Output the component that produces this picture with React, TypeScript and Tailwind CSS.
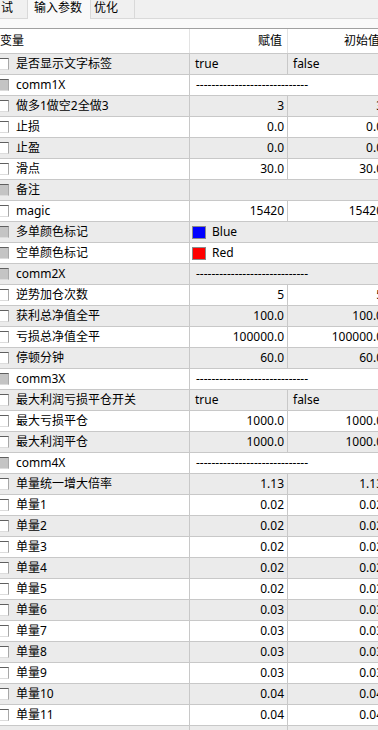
import React from "react";

type Row = {
  name: string;
  kind: "num" | "bool" | "group" | "empty" | "color";
  v?: string;
  init?: string;
  gray?: boolean;
  swatch?: string;
};

const rows: Row[] = [
  { name: "是否显示文字标签", kind: "bool", v: "true", init: "false" },
  { name: "comm1X", kind: "group", gray: true },
  { name: "做多1做空2全做3", kind: "num", v: "3", init: "3" },
  { name: "止损", kind: "num", v: "0.0", init: "0.0" },
  { name: "止盈", kind: "num", v: "0.0", init: "0.0" },
  { name: "滑点", kind: "num", v: "30.0", init: "30.0" },
  { name: "备注", kind: "empty", gray: true },
  { name: "magic", kind: "num", v: "15420", init: "15420" },
  { name: "多单颜色标记", kind: "color", v: "Blue", swatch: "bg-[#0000ff]", gray: true },
  { name: "空单颜色标记", kind: "color", v: "Red", swatch: "bg-[#ff0000]", gray: true },
  { name: "comm2X", kind: "group", gray: true },
  { name: "逆势加仓次数", kind: "num", v: "5", init: "5" },
  { name: "获利总净值全平", kind: "num", v: "100.0", init: "100.0" },
  { name: "亏损总净值全平", kind: "num", v: "100000.0", init: "100000.0" },
  { name: "停顿分钟", kind: "num", v: "60.0", init: "60.0" },
  { name: "comm3X", kind: "group", gray: true },
  { name: "最大利润亏损平仓开关", kind: "bool", v: "true", init: "false" },
  { name: "最大亏损平仓", kind: "num", v: "1000.0", init: "1000.0" },
  { name: "最大利润平仓", kind: "num", v: "1000.0", init: "1000.0" },
  { name: "comm4X", kind: "group", gray: true },
  { name: "单量统一增大倍率", kind: "num", v: "1.13", init: "1.13" },
  { name: "单量1", kind: "num", v: "0.02", init: "0.02" },
  { name: "单量2", kind: "num", v: "0.02", init: "0.02" },
  { name: "单量3", kind: "num", v: "0.02", init: "0.02" },
  { name: "单量4", kind: "num", v: "0.02", init: "0.02" },
  { name: "单量5", kind: "num", v: "0.02", init: "0.02" },
  { name: "单量6", kind: "num", v: "0.03", init: "0.03" },
  { name: "单量7", kind: "num", v: "0.03", init: "0.03" },
  { name: "单量8", kind: "num", v: "0.03", init: "0.03" },
  { name: "单量9", kind: "num", v: "0.03", init: "0.03" },
  { name: "单量10", kind: "num", v: "0.04", init: "0.04" },
  { name: "单量11", kind: "num", v: "0.04", init: "0.04" },
  { name: "", kind: "num", v: "", init: "" },
];

const DASHES = "-----------------------------";

function ParamRow({ row, i }: { row: Row; i: number }) {
  const bg = i % 2 === 0 ? "bg-[#ebebeb]" : "bg-white";
  const spans = row.kind === "group" || row.kind === "empty" || row.kind === "color";
  return (
    <div className={`grid grid-cols-[190px_98px_120px] h-[21px] border-b border-[#c8c8c8] ${bg}`}>
      <div className="flex items-center border-r border-[#c8c8c8]">
        {row.name && (
          <div
            className={`w-[9px] h-[12px] border-t border-r border-b border-t-[#5f5f5f] border-r-[#a8a8a8] border-b-[#dcdcdc] ${
              row.gray ? "bg-[#c4c4c4]" : "bg-white"
            }`}
          />
        )}
        <span className="ml-[7px] whitespace-nowrap">{row.name}</span>
      </div>
      {spans ? (
        <div className="col-span-2 flex items-center whitespace-nowrap">
          {row.kind === "group" && <span className="pl-[6px]">{DASHES}</span>}
          {row.kind === "color" && (
            <>
              <div className={`ml-[2px] w-[14px] h-[13px] border border-[#8a8a8a] ${row.swatch}`} />
              <span className="ml-[6px]">{row.v}</span>
            </>
          )}
        </div>
      ) : row.kind === "bool" ? (
        <>
          <div className="flex items-center pl-[5px] border-r border-[#c8c8c8]">{row.v}</div>
          <div className="flex items-center pl-[5px]">{row.init}</div>
        </>
      ) : (
        <>
          <div className="flex items-center justify-end pr-[3px] border-r border-[#c8c8c8]">{row.v}</div>
          <div className="flex items-center justify-end pr-[25px]">{row.init}</div>
        </>
      )}
    </div>
  );
}

export default function App() {
  return (
    <div
      className="w-[378px] h-[730px] overflow-hidden bg-white text-[12px] text-black"
      style={{ fontFamily: '"Noto Sans", "Noto Sans CJK SC", sans-serif' }}
    >
      {/* tab strip */}
      <div className="flex h-[19px] bg-[#f0f0f0] border-b border-[#d9d9d9]">
        <div className="w-[28px] pl-[1px] leading-[15px] border-r border-[#d9d9d9]">试</div>
        <div className="w-[63px] h-[19px] pl-[6px] leading-[15px] bg-[#f9f9f9] border-r border-[#d9d9d9]">
          输入参数
        </div>
        <div className="w-[44px] pl-[3px] leading-[15px] border-r border-[#d9d9d9]">优化</div>
      </div>
      <div className="h-[10px] bg-[#f9f9f9] border-b border-[#a0a0a0]" />

      {/* header */}
      <div className="grid grid-cols-[190px_98px_120px] h-[25px] border-b border-[#c8c8c8] bg-white">
        <div className="flex items-center border-r border-[#e3e3e3]">变量</div>
        <div className="flex items-center justify-end pr-[5px] border-r border-[#e3e3e3]">赋值</div>
        <div className="flex items-center justify-end pr-[28px]">初始值</div>
      </div>

      {rows.map((row, i) => (
        <ParamRow key={i} row={row} i={i} />
      ))}
    </div>
  );
}
